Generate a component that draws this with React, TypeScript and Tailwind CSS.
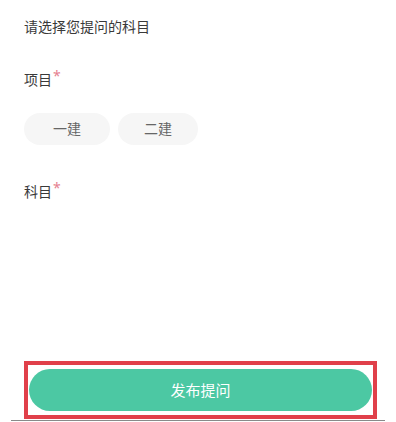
export default function App() {
  const font = { fontFamily: '"Noto Sans", "Noto Sans CJK SC", sans-serif' };
  return (
    <div className="w-[396px] h-[422px] bg-white flex flex-col overflow-hidden" style={font}>
      <div className="flex-1 flex flex-col px-6">
        <div className="mt-[17px] h-5 text-sm leading-5 text-[#3a3a3a]">请选择您提问的科目</div>

        <div className="mt-[33px] h-5 text-sm leading-5 text-[#3a3a3a] flex items-start">
          项目<span className="text-[#e57f8f] text-sm leading-3 ml-px">*</span>
        </div>

        <div className="mt-[23px] flex gap-2">
          <button className="w-[86px] h-8 rounded-full bg-[#f6f6f6] text-sm text-[#666666]">一建</button>
          <button className="w-[80px] h-8 rounded-full bg-[#f6f6f6] text-sm text-[#666666]">二建</button>
        </div>

        <div className="mt-[37px] h-5 text-sm leading-5 text-[#3a3a3a] flex items-start">
          科目<span className="text-[#e57f8f] text-sm leading-3 ml-px">*</span>
        </div>
      </div>

      <div className="px-6">
        <div className="w-[353px] h-[58px] border-4 border-[#e0404a] px-px py-1 flex">
          <button className="flex-1 rounded-full bg-[#4cc8a3] text-white text-[15px]">发布提问</button>
        </div>
      </div>
      <div className="mt-px mx-[11px] h-px bg-[#8a8a8a] mb-px" />
    </div>
  );
}
